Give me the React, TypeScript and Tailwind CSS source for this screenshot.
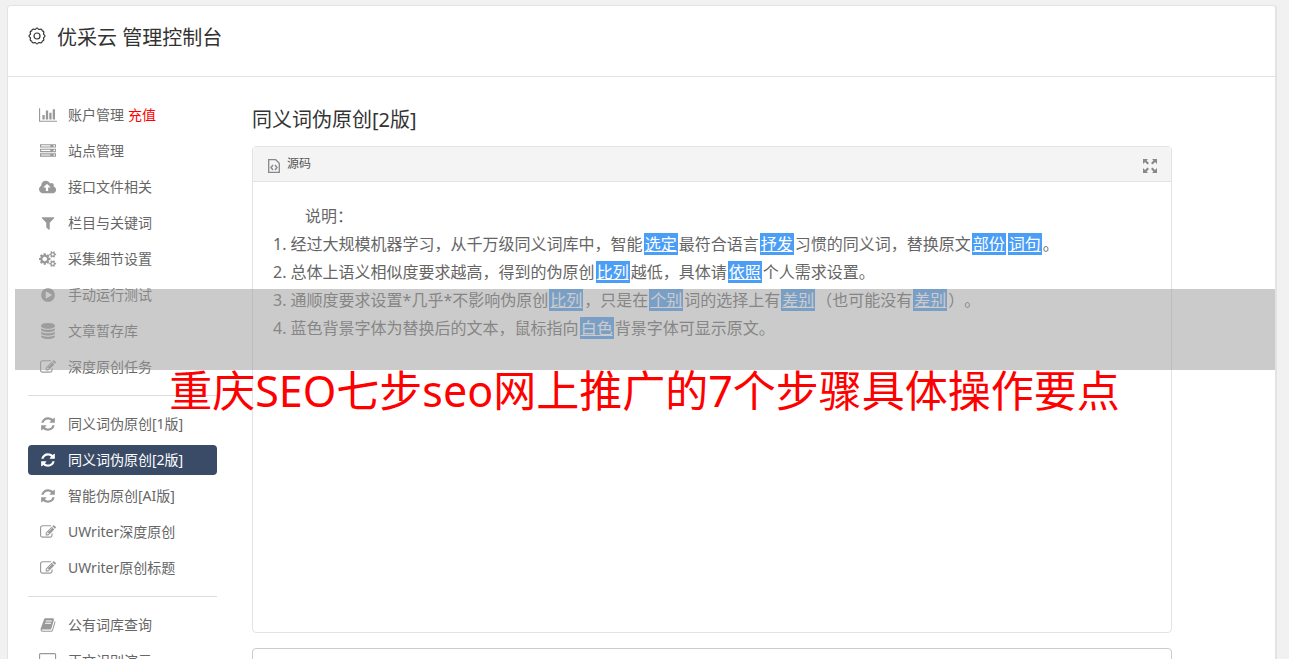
import React from 'react';

type IconProps = { box?: string; d: string };

// --- ICONS ---
const Glyph: React.FC<IconProps> = ({ box = '0 0 1792 1792', d }) => (
  <svg className="h-4 w-auto" viewBox={box} fill="currentColor" aria-hidden="true">
    <path d={d} />
  </svg>
);

const BarChart = () => (
  <Glyph box="0 0 2048 1792" d="M640 896v512h-256v-512h256zm384-512v1024h-256v-1024h256zm1024 1152v128h-2048v-1536h128v1408h1920zm-640-896v768h-256v-768h256zm384-384v1152h-256v-1152h256z" />
);

const Server = () => (
  <Glyph d="M128 1408h1024v-128h-1024v128zm0-512h1024v-128h-1024v128zm1568 448q0-40-28-68t-68-28-68 28-28 68 28 68 68 28 68-28 28-68zm-1568-960h1024v-128h-1024v128zm1568 448q0-40-28-68t-68-28-68 28-28 68 28 68 68 28 68-28 28-68zm0-512q0-40-28-68t-68-28-68 28-28 68 28 68 68 28 68-28 28-68zm96 832v384h-1792v-384h1792zm0-512v384h-1792v-384h1792zm0-512v384h-1792v-384h1792z" />
);

const CloudUpload = () => (
  <Glyph box="0 0 1920 1792" d="M1280 928q0-14-9-23l-352-352q-9-9-23-9t-23 9l-351 351q-10 12-10 24 0 14 9 23t23 9h224v352q0 13 9.500 22.500t22.500 9.500h192q13 0 22.500-9.500t9.500-22.500v-352h224q13 0 22.500-9.500t9.500-22.500zm640 288q0 159-112.500 271.500t-271.500 112.500h-1088q-185 0-316.500-131.500t-131.500-316.500q0-130 70-240t188-165q-2-30-2-43 0-212 150-362t362-150q156 0 285.500 87t188.500 231q71-62 166-62 106 0 181 75t75 181q0 76-41 138 130 31 213.500 135.500t83.500 238.500z" />
);

const Filter = () => (
  <Glyph d="M1595 295q17 41-14 70l-493 493v742q0 42-39 59-13 5-25 5-27 0-45-19l-256-256q-19-19-19-45v-486l-493-493q-31-29-14-70 17-39 59-39h1280q42 0 59 39z" />
);

const Cogs = () => (
  <Glyph box="0 0 1920 1792" d="M896 896q0-106-75-181t-181-75-181 75-75 181 75 181 181 75 181-75 75-181zm768 512q0-52-38-90t-90-38-90 38-38 90q0 53 37.500 90.500t90.500 37.500 90.500-37.500 37.500-90.500zm0-1024q0-52-38-90t-90-38-90 38-38 90q0 53 37.500 90.500t90.500 37.500 90.500-37.500 37.500-90.500zm-384 421v185q0 10-7 19.500t-16 10.500l-155 24q-11 35-32 76 34 48 90 115 7 11 7 20 0 12-7 19-23 30-82.500 89.500t-78.500 59.500q-11 0-21-7l-115-90q-37 19-77 31-11 108-23 155-7 24-30 24h-186q-11 0-20-7.500t-10-17.500l-23-153q-34-10-75-31l-118 89q-7 7-20 7-11 0-21-8-144-133-144-160 0-9 7-19 10-14 41-53t47-61q-23-44-35-82l-152-24q-10-1-17-9.500t-7-19.500v-185q0-10 7-19.500t16-10.500l155-24q11-35 32-76-34-48-90-115-7-11-7-20 0-12 7-20 22-30 82-89t79-59q11 0 21 7l115 90q34-18 77-32 11-108 23-154 7-24 30-24h186q11 0 20 7.500t10 17.500l23 153q34 10 75 31l118-89q8-7 20-7 11 0 21 8 144 133 144 160 0 8-7 19-12 16-42 54t-45 60q23 48 34 82l152 23q10 2 17 10.500t7 19.500zm640 533v140q0 16-149 31-12 27-30 52 51 113 51 138 0 4-4 7-122 71-124 71-8 0-46-47t-52-68q-20 2-30 2t-30-2q-14 21-52 68t-46 47q-2 0-124-71-4-3-4-7 0-25 51-138-18-25-30-52-149-15-149-31v-140q0-16 149-31 13-29 30-52-51-113-51-138 0-4 4-7 4-2 35-20t59-34 30-16q8 0 46 46.500t52 67.500q20-2 30-2t30 2q51-71 92-112l6-2q4 0 124 70 4 3 4 7 0 25-51 138 17 23 30 52 149 15 149 31zm0-1024v140q0 16-149 31-12 27-30 52 51 113 51 138 0 4-4 7-122 71-124 71-8 0-46-47t-52-68q-20 2-30 2t-30-2q-14 21-52 68t-46 47q-2 0-124-71-4-3-4-7 0-25 51-138-18-25-30-52-149-15-149-31v-140q0-16 149-31 13-29 30-52-51-113-51-138 0-4 4-7 4-2 35-20t59-34 30-16q8 0 46 46.500t52 67.500q20-2 30-2t30 2q51-71 92-112l6-2q4 0 124 70 4 3 4 7 0 25-51 138 17 23 30 52 149 15 149 31z" />
);

const PlayCircle = () => (
  <Glyph d="M896 128q209 0 385.500 103t279.500 279.500 103 385.500-103 385.500-279.500 279.500-385.500 103-385.500-103-279.500-279.500-103-385.500 103-385.500 279.500-279.500 385.500-103zm384 823q32-18 32-55t-32-55l-544-320q-31-19-64-1-32 19-32 56v640q0 37 32 56 16 8 32 8 17 0 32-9z" />
);

const Database = () => (
  <Glyph d="M896 768q237 0 443-43t325-127v170q0 69-103 128t-280 93.500-385 34.500-385-34.500-280-93.500-103-128v-170q119 84 325 127t443 43zm0 768q237 0 443-43t325-127v170q0 69-103 128t-280 93.500-385 34.500-385-34.500-280-93.500-103-128v-170q119 84 325 127t443 43zm0-384q237 0 443-43t325-127v170q0 69-103 128t-280 93.500-385 34.500-385-34.500-280-93.500-103-128v-170q119 84 325 127t443 43zm0-1152q208 0 385 34.500t280 93.500 103 128v128q0 69-103 128t-280 93.500-385 34.500-385-34.500-280-93.500-103-128v-128q0-69 103-128t280-93.500 385-34.500z" />
);

const Edit = () => (
  <Glyph d="M888 1184l116-116-152-152-116 116v56h96v96h56zm440-720q-16-16-33 1l-350 350q-17 17-1 33t33-1l350-350q17-17 1-33zm80 594v190q0 119-84.500 203.500t-203.500 84.500h-832q-119 0-203.500-84.500t-84.500-203.500v-832q0-119 84.500-203.500t203.500-84.500h832q63 0 117 25 15 7 18 23 3 17-9 29l-49 49q-14 14-32 8-23-6-45-6h-832q-66 0-113 47t-47 113v832q0 66 47 113t113 47h832q66 0 113-47t47-113v-126q0-13 9-22l64-64q15-15 35-7t20 29zm-96-738l288 288-672 672h-288v-288zm444 132l-92 92-288-288 92-92q28-28 68-28t68 28l152 152q28 28 28 68t-28 68z" />
);

const Refresh = () => (
  <Glyph d="M1639 1056q0 5-1 7-64 268-268 434.500t-478 166.500q-146 0-282.500-55t-243.500-157l-129 129q-19 19-45 19t-45-19-19-45v-448q0-26 19-45t45-19h448q26 0 45 19t19 45-19 45l-137 137q71 66 161 102t187 36q134 0 250-65t186-179q11-17 53-117 8-23 30-23h192q13 0 22.500 9.500t9.500 22.500zm25-800v448q0 26-19 45t-45 19h-448q-26 0-45-19t-19-45 19-45l138-138q-148-137-349-137-134 0-250 65t-186 179q-11 17-53 117-8 23-30 23h-199q-13 0-22.500-9.500t-9.500-22.500v-7q65-268 270-434.500t480-166.500q146 0 284 55.500t245 156.500l130-129q19-19 45-19t45 19 19 45z" />
);

const Book = () => (
  <Glyph d="M1703 478q40 57 18 129l-275 906q-19 64-76.500 107.500t-122.500 43.500h-923q-77 0-148.500-53.500t-99.500-131.500q-24-67-2-127 0-4 3-27t4-37q1-8-3-21.500t-3-19.500q2-11 8-21t16.500-23.500 16.500-23.500q23-38 45-91.500t30-91.500q3-10 .5-30t-.5-28q3-11 17-28t17-23q21-36 42-92t25-90q1-9-2.500-32t.5-28q4-13 22-30.500t22-22.500q19-26 42.500-84.500t27.500-96.500q1-8-3-25.500t-2-26.500q2-8 9-18t18-23 17-21q8-12 16.500-30.500t15-35 16-36 19.500-32 26.500-23.500 36-11.500 47.500 5.500l-1 3q38-9 51-9h761q74 0 114 56t18 130l-274 906q-36 119-71.500 153.500t-128.500 34.500h-869q-27 0-38 15-11 16-1 43 24 70 144 70h923q29 0 56-15.500t35-41.500l300-987q7-22 5-57 38 15 59 43zm-1064 2q-4 13 2 22.500t20 9.500h608q13 0 25.500-9.500t16.500-22.500l21-64q4-13-2-22.500t-20-9.500h-608q-13 0-25.500 9.500t-16.500 22.500zm-83 256q-4 13 2 22.500t20 9.500h608q13 0 25.500-9.500t16.500-22.500l21-64q4-13-2-22.500t-20-9.500h-608q-13 0-25.500 9.500t-16.500 22.500z" />
);

const Desktop = () => (
  <Glyph box="0 0 1920 1792" d="M1792 992v-832q0-13-9.500-22.500t-22.500-9.500h-1600q-13 0-22.500 9.500t-9.500 22.500v832q0 13 9.500 22.500t22.500 9.500h1600q13 0 22.500-9.500t9.500-22.500zm128-832v1088q0 66-47 113t-113 47h-544q0 37 16 77.500t32 71 16 43.500q0 26-19 45t-45 19h-512q-26 0-45-19t-19-45q0-14 16-44t32-70 16-78h-544q-66 0-113-47t-47-113v-1088q0-66 47-113t113-47h1600q66 0 113 47t47 113z" />
);

const Gear = () => (
  <svg className="size-[18px]" viewBox="0 0 18 18" fill="none" stroke="currentColor" strokeWidth="1.200" strokeLinejoin="round" aria-hidden="true">
    <circle cx="9" cy="9" r="3" />
    <path d="M7.600 2.200Q9-.2 10.400 2.200L11.200 2.500Q14 1.400 14.200 3.800Q16.600 4 15.500 6.800L15.800 7.600Q18.200 9 15.800 10.400L15.500 11.200Q16.600 14 14.200 14.200Q14 16.600 11.200 15.500L10.400 15.800Q9 18.200 7.600 15.800L6.800 15.500Q4 16.600 3.800 14.200Q1.400 14 2.500 11.200L2.200 10.400Q-.2 9 2.200 7.600L2.500 6.800Q1.400 4 3.800 3.800Q4 1.400 6.800 2.500z" />
  </svg>
);

const SourceFile = () => (
  <svg className="h-4 w-3" viewBox="0 0 12 16" fill="none" stroke="currentColor" aria-hidden="true">
    <path d="M.7 1.700h7l3.600 3.600v9H.7z" strokeWidth="1.300" />
    <path d="M5 7L3 9.500 5 12M7 7l2 2.500L7 12" strokeWidth="1.400" />
  </svg>
);

const Expand = () => (
  <svg className="size-4" viewBox="0 0 16 16" fill="currentColor" aria-hidden="true">
    <path d="M1 1h5L4.500 2.500l2.500 2.500-1.500 1.500L3 4 1 6zM15 1v5l-2-2-2.500 2.500L9 5l2.500-2.500L10 1zM1 15v-5l2 2 2.500-2.500L7 11l-2.500 2.500L6 15zM15 15h-5l1.500-1.500L9 11l1.500-1.500L13 12l2-2z" />
  </svg>
);

const groups = [
  [
    { label: '账户管理', extra: '充值', icon: <BarChart /> },
    { label: '站点管理', icon: <Server /> },
    { label: '接口文件相关', icon: <CloudUpload /> },
    { label: '栏目与关键词', icon: <Filter /> },
    { label: '采集细节设置', icon: <Cogs /> },
    { label: '手动运行测试', icon: <PlayCircle /> },
    { label: '文章暂存库', icon: <Database /> },
    { label: '深度原创任务', icon: <Edit /> },
  ],
  [
    { label: '同义词伪原创[1版]', icon: <Refresh /> },
    { label: '同义词伪原创[2版]', icon: <Refresh />, active: true },
    { label: '智能伪原创[AI版]', icon: <Refresh /> },
    { label: 'UWriter深度原创', icon: <Edit /> },
    { label: 'UWriter原创标题', icon: <Edit /> },
  ],
  [
    { label: '公有词库查询', icon: <Book /> },
    { label: '正文识别演示', icon: <Desktop /> },
  ],
] as { label: string; extra?: string; icon: React.ReactNode; active?: boolean }[][];

const Mark: React.FC<{ children: React.ReactNode }> = ({ children }) => (
  <span className="mx-px bg-[#4b9ef5] px-px text-white underline">{children}</span>
);

const Sidebar = () => (
  <nav className="w-[189px] shrink-0 text-sm text-[#666]">
    {groups.map((group, index) => (
      <ul
        key={index}
        className={index > 0 ? 'mt-[13px] flex flex-col gap-1.5 border-t border-[#ddd] pt-[13px]' : 'flex flex-col gap-1.5'}
      >
        {group.map((item) => (
          <li key={item.label}>
            <a
              href="#"
              className={
                item.active
                  ? 'flex h-[30px] items-center rounded bg-[#3a4b67] pl-2.5 text-white'
                  : 'flex h-[30px] items-center pl-2.5'
              }
            >
              <span className={item.active ? 'mr-2.5 flex w-5 justify-center' : 'mr-2.5 flex w-5 justify-center text-[#999]'}>
                {item.icon}
              </span>
              {item.label}
              {item.extra && <span className="ml-1 text-[#f00]">{item.extra}</span>}
            </a>
          </li>
        ))}
      </ul>
    ))}
  </nav>
);

const Editor = () => (
  <main className="w-full max-w-[920px]">
    <h2 className="mt-1 text-xl leading-8 text-[#333]">同义词伪原创[2版]</h2>
    <section className="mt-2.5 min-h-[487px] rounded border border-[#e3e3e3]">
      <div className="flex h-[35px] items-center justify-between border-b border-[#e3e3e3] bg-[#f4f4f4] pr-[13px] pl-[15px] text-[#888]">
        <button type="button" className="flex items-center gap-[7px] text-xs text-[#555]">
          <span className="pt-1 text-[#888]"><SourceFile /></span>
          源码
        </button>
        <button type="button" aria-label="全屏" className="pt-1">
          <Expand />
        </button>
      </div>
      <div className="px-5 pt-5 text-base leading-7 text-[#666] [text-spacing-trim:space-all]">
        <p className="indent-8">说明：</p>
        <ol className="list-inside list-decimal">
          <li>经过大规模机器学习，从千万级同义词库中，智能<Mark>选定</Mark>最符合语言<Mark>抒发</Mark>习惯的同义词，替换原文<Mark>部份</Mark><Mark>词句</Mark>。</li>
          <li>总体上语义相似度要求越高，得到的伪原创<Mark>比列</Mark>越低，具体请<Mark>依照</Mark>个人需求设置。</li>
          <li>通顺度要求设置*几乎*不影响伪原创<Mark>比列</Mark>，只是在<Mark>个别</Mark>词的选择上有<Mark>差别</Mark>（也可能没有<Mark>差别</Mark>）。</li>
          <li>蓝色背景字体为替换后的文本，鼠标指向<Mark>白色</Mark>背景字体可显示原文。</li>
        </ol>
      </div>
    </section>
    <section className="mt-[15px] h-40 rounded border border-[#ccc]" />
  </main>
);

const App: React.FC = () => {
  return (
    <div lang="zh-CN" className="relative h-screen overflow-hidden bg-[#f1f1f1] pt-[5px] pr-3 pl-[7px] font-['Noto_Sans','Noto_Sans_CJK_SC',sans-serif]">
      <div className="rounded border border-r-2 border-[#e3e3e3] bg-white">
        <header className="flex h-[71px] items-start gap-[11px] border-b border-[#e3e3e3] px-5 pt-4 text-[#333]">
          <span className="flex h-7 items-center"><Gear /></span>
          <h1 className="text-xl leading-8">优采云 管理控制台</h1>
        </header>
        <div className="flex gap-[35px] px-5 pt-[23px]">
          <Sidebar />
          <Editor />
        </div>
      </div>

      {/* banner */}
      <div className="absolute top-[289px] right-3.5 left-[15px] h-[81px] bg-[#a0a0a0]/55" />
      <p className="absolute top-[359px] right-0 left-0 text-center text-[43px] leading-[64px] whitespace-nowrap text-[#f00]">
        重庆SEO七步seo网上推广的7个步骤具体操作要点
      </p>
    </div>
  );
};

export default App;
